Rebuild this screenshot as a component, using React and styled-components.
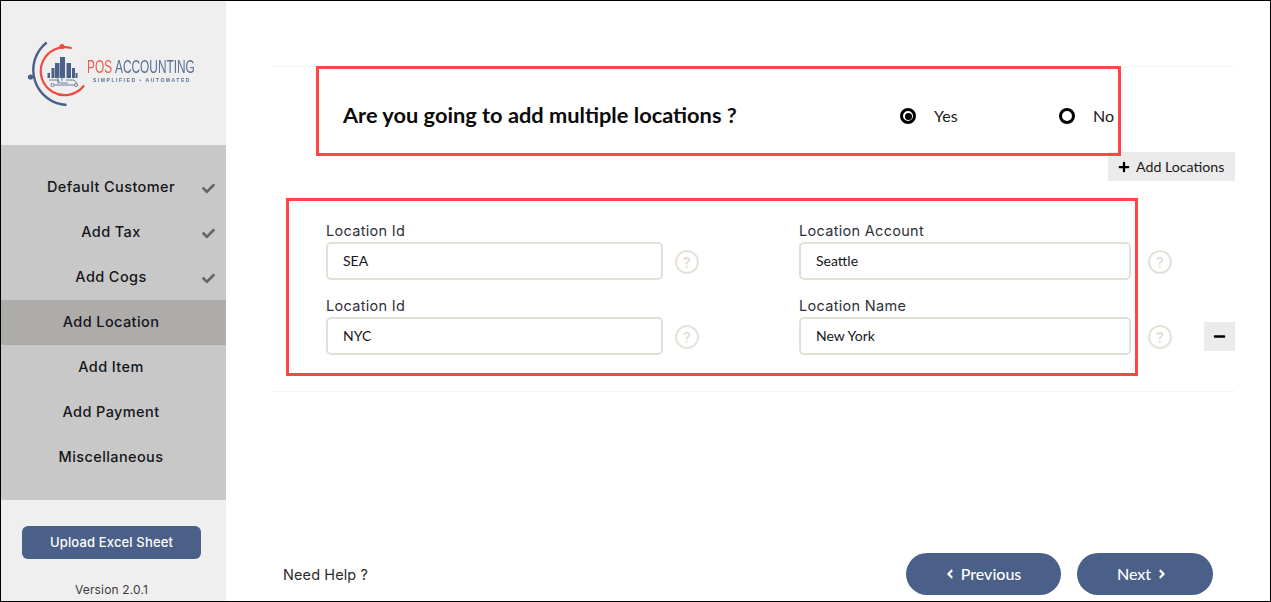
import React from "react";
import styled, {createGlobalStyle} from "styled-components";
import {FaCheck, FaPlus, FaMinus, FaAngleLeft, FaAngleRight} from "react-icons/fa";

const Global = createGlobalStyle`
  html, body {
    margin: 0;
    padding: 0;
    background: #fff;
  }
  * {
    box-sizing: border-box;
  }
`;

const body = `Inter, "Liberation Sans", sans-serif`;
const lato = `Lato, "Liberation Sans", sans-serif`;

const Frame = styled.div`
  position: relative;
  width: 1271px;
  height: 602px;
  border: 1px solid #000;
  display: flex;
  overflow: hidden;
  background: #fff;
`;
const Sidebar = styled.aside`
  width: 225px;
  flex-shrink: 0;
  display: flex;
  flex-direction: column;
  background: #efefef;
`;
const LogoPanel = styled.div`
  height: 144px;
  svg {
    display: block;
    filter: blur(0.4px);
  }
`;
const Menu = styled.nav`
  height: 355px;
  padding: 20px 0;
  background: #c8c8c8;
`;
const MenuItem = styled.div`
  position: relative;
  height: 45px;
  padding: 0 5px 2px 0;
  display: flex;
  align-items: center;
  justify-content: center;
  font: 500 14.5px ${body};
  letter-spacing: 0.4px;
  color: #15151a;
  background: ${props => props.$active ? "#aeabab" : "transparent"};
`;
const Done = styled.span`
  position: absolute;
  right: 11px;
  top: 17px;
  color: #666;
  font-size: 13px;
  line-height: 0;
`;
const SideFoot = styled.div`
  flex: 1;
  display: flex;
  flex-direction: column;
  align-items: center;
  padding: 26px 4px 0 0;
`;
const Upload = styled.button`
  width: 179px;
  height: 33px;
  border: 0;
  padding: 0 0 2px;
  border-radius: 6px;
  background: #4a6088;
  color: #fff;
  font: 500 13px ${body};
  letter-spacing: 0.15px;
`;
const Version = styled.div`
  margin-top: 23px;
  font: 400 12px ${body};
  letter-spacing: 0.15px;
  color: #3b3b3b;
`;
const Main = styled.main`
  flex: 1;
  padding: 65px 35px 6px 46px;
  display: flex;
  flex-direction: column;
`;
const Section = styled.section`
  border-top: 1px solid #f7f7f7;
  border-bottom: 1px solid #f5f5f5;
  padding-bottom: 36px;
`;
const QuestionRow = styled.div`
  height: 85px;
  padding: 36px 0 0 71px;
  display: flex;
  align-items: flex-start;
`;
const Question = styled.h2`
  margin: -1px 0 0;
  width: 557px;
  font: 700 21.8px/26px ${lato};
  color: #0a0a0a;
`;
const RadioOption = styled.label`
  display: flex;
  align-items: center;
  gap: 18px;
  width: 159px;
  height: 26px;
  font: 400 16px ${lato};
  color: #1a1a1a;
`;
const RadioText = styled.span`
  margin-top: -2px;
`;
const RadioDot = styled.span`
  width: 16px;
  height: 16px;
  border-radius: 50%;
  border: 3px solid #000;
  display: flex;
  align-items: center;
  justify-content: center;
  &::after {
    content: "";
    width: 7px;
    height: 7px;
    border-radius: 50%;
    background: ${props => props.$on ? "#000" : "transparent"};
  }
`;
const AddRow = styled.div`
  display: flex;
  justify-content: flex-end;
  margin-bottom: 42px;
`;
const AddButton = styled.button`
  width: 127px;
  height: 29px;
  border: 0;
  padding: 0 0 0 10px;
  background: #ebebeb;
  display: flex;
  align-items: center;
  gap: 6px;
  font: 400 14.2px ${lato};
  color: #1a1a1a;
  svg {
    color: #000;
    font-size: 12px;
  }
`;
const FieldGrid = styled.div`
  padding-left: 54px;
  display: grid;
  grid-template-columns: 337px 136px 332px 73px 31px;
  row-gap: 18px;
`;
const Field = styled.div`
  display: flex;
  flex-direction: column;
`;
const Label = styled.label`
  height: 19px;
  font: 400 14.5px/15px ${body};
  letter-spacing: 0.3px;
  color: #2f2f38;
`;
const Input = styled.input`
  width: 100%;
  height: 38px;
  padding: 0 15px 2px;
  border: 2px solid #e4e0d7;
  border-radius: 5px;
  outline: none;
  font: 400 14px ${lato};
  color: #15151a;
  background: #fff;
`;
const HelpCell = styled.div`
  padding: 27px 0 0 ${props => props.$pad}px;
`;
const Help = styled.span`
  width: 24px;
  height: 24px;
  border: 2px solid #e6e2d9;
  border-radius: 50%;
  display: flex;
  align-items: center;
  justify-content: center;
  font: 700 14px ${body};
  color: #e4e0d7;
`;
const RemoveCell = styled.div`
  padding-top: 24px;
`;
const RemoveButton = styled.button`
  width: 31px;
  height: 29px;
  border: 0;
  padding: 0;
  background: #ebebeb;
  display: flex;
  align-items: center;
  justify-content: center;
  color: #000;
  font-size: 13px;
`;
const Footer = styled.div`
  margin-top: auto;
  padding: 0 22px 0 11px;
  display: flex;
  align-items: center;
  gap: 16px;
`;
const NeedHelp = styled.div`
  margin-right: auto;
  font: 400 14.5px ${body};
  letter-spacing: 0.1px;
  color: #2b2b2b;
`;
const NavButton = styled.button`
  width: ${props => props.$width}px;
  height: 42px;
  border: 0;
  padding: 0 ${props => props.$nudge}px 2px 0;
  border-radius: 21px;
  background: #4a6088;
  color: #fff;
  display: flex;
  align-items: center;
  justify-content: center;
  gap: 4px;
  font: 500 16px ${lato};
  svg {
    font-size: 14px;
    margin-top: 2px;
  }
`;
const Callout = styled.div`
  position: absolute;
  left: ${props => props.$x}px;
  top: ${props => props.$y}px;
  width: ${props => props.$w}px;
  height: ${props => props.$h}px;
  border: 3px solid #ff4545;
  pointer-events: none;
`;

const steps = [
    {name: "Default Customer", done: true},
    {name: "Add Tax", done: true},
    {name: "Add Cogs", done: true},
    {name: "Add Location", active: true},
    {name: "Add Item"},
    {name: "Add Payment"},
    {name: "Miscellaneous"},
];

const rows = [
    {idLabel: "Location Id", id: "SEA", nameLabel: "Location Account", name: "Seattle"},
    {idLabel: "Location Id", id: "NYC", nameLabel: "Location Name", name: "New York", removable: true},
];

function Logo() {
    return (
        <svg width="225" height="144" viewBox="1 1 225 144">
            <path d="M46.7 42.5 A35 35 0 0 0 66.5 105" fill="none" stroke="#4a6088" strokeWidth="2.4"/>
            <circle cx="30.5" cy="77" r="2.6" fill="#4a6088"/>
            <path d="M71.7 48.2 A24 24 0 1 0 84 85.5" fill="none" stroke="#ef4b41" strokeWidth="2.2"/>
            <circle cx="62" cy="46.5" r="2.6" fill="#ef4b41"/>
            <g fill="#4a6088">
                <rect x="47.5" y="73" width="2.5" height="5"/>
                <rect x="51.5" y="68" width="3" height="10"/>
                <rect x="55" y="63" width="4.5" height="15"/>
                <rect x="60" y="57" width="5" height="21"/>
                <rect x="66.5" y="63" width="4.5" height="15"/>
                <rect x="72" y="68" width="3" height="10"/>
                <rect x="75.5" y="73" width="2" height="5"/>
            </g>
            <g fill="none" stroke="#6d7f9f" strokeWidth="1">
                <path d="M49 80 H58 L60 83 H68 M58 76 V84 M62 76 V81 M66 80 H74 L78 85"/>
                <path d="M54 85 H74"/>
                <circle cx="52.5" cy="85" r="1.6"/>
                <circle cx="76" cy="85" r="1.6"/>
            </g>
            <g transform="translate(87 73) scale(0.66 1)" fontFamily="Liberation Sans" fontSize="18">
                <text fill="#ef5a50">POS</text>
                <text x="42.4" fill="#5a6f95">ACCOUNTING</text>
            </g>
            <text x="93" y="81.5" fontFamily="Liberation Sans" fontWeight="700" fontSize="5" letterSpacing="1.55" fill="#5a6f95">SIMPLIFIED • AUTOMATED</text>
        </svg>
    );
}

function App() {
    return (
        <Frame>
            <Global/>
            <Sidebar>
                <LogoPanel>
                    <Logo/>
                </LogoPanel>
                <Menu>
                    {steps.map((step) => (
                        <MenuItem key={step.name} $active={step.active}>
                            {step.name}
                            {step.done && <Done><FaCheck/></Done>}
                        </MenuItem>
                    ))}
                </Menu>
                <SideFoot>
                    <Upload>Upload Excel Sheet</Upload>
                    <Version>Version 2.0.1</Version>
                </SideFoot>
            </Sidebar>
            <Main>
                <Section>
                    <QuestionRow>
                        <Question>Are you going to add multiple locations ?</Question>
                        <RadioOption><RadioDot $on/><RadioText>Yes</RadioText></RadioOption>
                        <RadioOption><RadioDot/><RadioText>No</RadioText></RadioOption>
                    </QuestionRow>
                    <AddRow>
                        <AddButton><FaPlus/>Add Locations</AddButton>
                    </AddRow>
                    <FieldGrid>
                        {rows.map((row) => (
                            <React.Fragment key={row.id}>
                                <Field>
                                    <Label>{row.idLabel}</Label>
                                    <Input defaultValue={row.id}/>
                                </Field>
                                <HelpCell $pad={12}><Help>?</Help></HelpCell>
                                <Field>
                                    <Label>{row.nameLabel}</Label>
                                    <Input defaultValue={row.name}/>
                                </Field>
                                <HelpCell $pad={17}><Help>?</Help></HelpCell>
                                <RemoveCell>
                                    {row.removable && <RemoveButton><FaMinus/></RemoveButton>}
                                </RemoveCell>
                            </React.Fragment>
                        ))}
                    </FieldGrid>
                </Section>
                <Footer>
                    <NeedHelp>Need Help ?</NeedHelp>
                    <NavButton $width={155} $nudge={3}><FaAngleLeft/>Previous</NavButton>
                    <NavButton $width={136} $nudge={4}>Next<FaAngleRight/></NavButton>
                </Footer>
            </Main>
            <Callout $x={315} $y={65} $w={805} $h={90}/>
            <Callout $x={285} $y={197} $w={852} $h={178}/>
        </Frame>
    );
}

export default App;
